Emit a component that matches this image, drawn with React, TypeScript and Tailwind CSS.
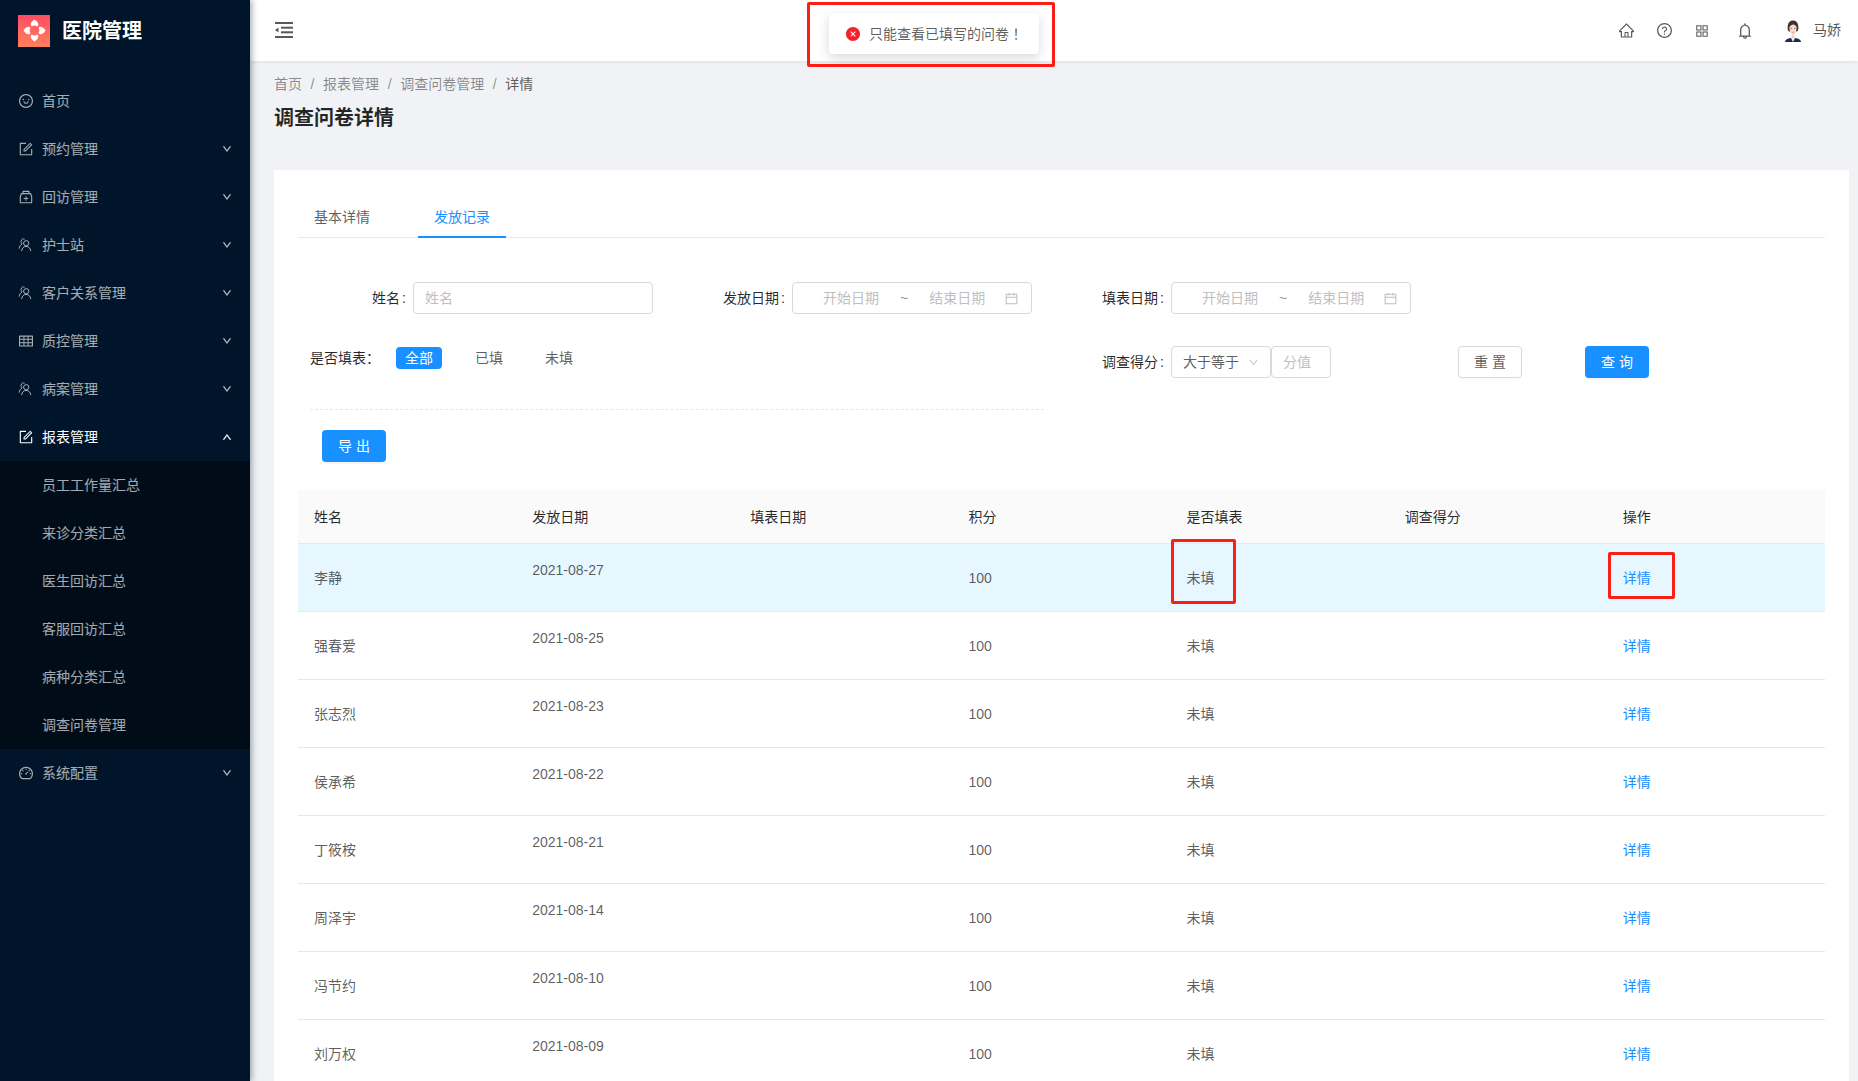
import {
  AiOutlineSmile,
  AiOutlineForm,
  AiOutlineMedicineBox,
  AiOutlineTable,
  AiOutlineDashboard,
  AiOutlineDown,
  AiOutlineUp,
  AiOutlineHome,
  AiOutlineQuestionCircle,
  AiOutlineAppstore,
  AiOutlineBell,
  AiOutlineCalendar,
  AiFillCloseCircle,
} from 'react-icons/ai';

const font = 'font-["Liberation_Sans","Noto_Sans_CJK_SC",sans-serif]';

function PeopleIcon() {
  return (
    <svg viewBox="0 0 14 14" width="14" height="14" fill="none" stroke="currentColor" strokeWidth="1">
      <circle cx="8.2" cy="5.2" r="2.6" />
      <path d="M3.6 13c.4-2.8 2.2-4.6 4.6-4.6s4.2 1.8 4.6 4.6" />
      <path d="M6.6 1.2C5 .4 3 1.4 3 3.4c0 1 .5 1.8 1.2 2.3C2.6 6.6 1.4 8.4 1.2 10.6" />
    </svg>
  );
}

function Logo() {
  const petal =
    'M12 .5c1.6 1 4 3 4 5.200 0 .9-.5 1.600-1.300 2.100C13.900 7.200 13 6.900 12 6.900s-1.900.3-2.700.9C8.500 7.300 8 6.600 8 5.700 8 3.500 10.400 1.500 12 .5z';
  return (
    <div className="w-[32px] h-[32px] bg-gradient-to-b from-[#ff4a63] to-[#ff7f5c] flex items-center justify-center">
      <svg viewBox="0 0 24 24" width="23" height="23" fill="#fff">
        <path d={petal} />
        <path d={petal} transform="rotate(90 12 12)" />
        <path d={petal} transform="rotate(180 12 12)" />
        <path d={petal} transform="rotate(270 12 12)" />
      </svg>
    </div>
  );
}

function Avatar() {
  return (
    <svg viewBox="0 0 16 22" width="16" height="22">
      <path d="M0 22c.6-3 3-4 8-4s7.4 1 8 4z" fill="#1f2a44" />
      <path d="M5.500 17h5L8 22z" fill="#f3f1ee" />
      <path d="M2.600 8c0-5 2-7.600 5.400-7.600S13.400 3 13.400 8c0 2-.6 3-1.400 3.600H4C3.200 11 2.600 10 2.600 8z" fill="#4a2f2a" />
      <path d="M4.400 7.600C5 5.600 6.400 5 8.600 4.600c1.600.6 2.800 1.400 3 3 0 4-1.600 7.400-3.600 7.400S4.400 11.600 4.400 7.600z" fill="#f4dbcf" />
      <path d="M6.600 15h2.800v3H6.600z" fill="#f0d2c4" />
      <path d="M5.600 8.400h1.400M9 8.400h1.400" stroke="#3a2a28" strokeWidth=".6" />
      <path d="M7 12.300h2" stroke="#c9605f" strokeWidth=".6" />
    </svg>
  );
}

const menu = [
  { label: '首页', icon: <AiOutlineSmile size={16} /> },
  { label: '预约管理', icon: <AiOutlineForm size={16} />, arrow: true },
  { label: '回访管理', icon: <AiOutlineMedicineBox size={16} />, arrow: true },
  { label: '护士站', icon: <PeopleIcon />, arrow: true },
  { label: '客户关系管理', icon: <PeopleIcon />, arrow: true },
  { label: '质控管理', icon: <AiOutlineTable size={16} />, arrow: true },
  { label: '病案管理', icon: <PeopleIcon />, arrow: true },
];

const subMenu = ['员工工作量汇总', '来诊分类汇总', '医生回访汇总', '客服回访汇总', '病种分类汇总', '调查问卷管理'];

const rows = [
  ['李静', '2021-08-27'],
  ['强春爱', '2021-08-25'],
  ['张志烈', '2021-08-23'],
  ['侯承希', '2021-08-22'],
  ['丁筱桉', '2021-08-21'],
  ['周泽宇', '2021-08-14'],
  ['冯节约', '2021-08-10'],
  ['刘万权', '2021-08-09'],
];

function MenuItem({ label, icon, arrow, open }: { label: string; icon: React.ReactNode; arrow?: boolean; open?: boolean }) {
  return (
    <div className={`h-[48px] flex items-center pl-[18px] pr-[18px] ${open ? 'text-white' : 'text-white/65'}`}>
      <span className="w-[24px] shrink-0 flex items-center">{icon}</span>
      <span className="flex-1 text-[14px]">{label}</span>
      {arrow && (open ? <AiOutlineUp size={10} strokeWidth={60} /> : <AiOutlineDown size={10} strokeWidth={60} />)}
    </div>
  );
}

function Sidebar() {
  return (
    <aside className="w-[250px] shrink-0 bg-[#001529] relative z-10 shadow-[2px_0_6px_rgba(0,21,41,0.35)]">
      <div className="h-[61px] flex items-center pl-[18px] gap-[12px]">
        <Logo />
        <span className="text-[20px] font-bold text-white">医院管理</span>
      </div>
      <nav className="mt-[16px]">
        {menu.map((m) => (
          <MenuItem key={m.label} {...m} />
        ))}
        <MenuItem label="报表管理" icon={<AiOutlineForm size={16} />} arrow open />
        <div className="bg-[#000c17]">
          {subMenu.map((s) => (
            <div key={s} className="h-[48px] flex items-center pl-[42px] text-[14px] text-white/65">
              {s}
            </div>
          ))}
        </div>
        <MenuItem label="系统配置" icon={<AiOutlineDashboard size={16} />} arrow />
      </nav>
    </aside>
  );
}

function TopBar() {
  return (
    <header className="h-[61px] shrink-0 bg-white shadow-[0_1px_4px_rgba(0,21,41,0.08)] flex items-center pl-[25px] pr-[17px] relative">
      <svg viewBox="0 0 18 16" width="18" height="16" className="text-[#595959] mt-[-1px]" fill="currentColor">
        <rect x="0" y="0" width="18" height="2" />
        <rect x="6" y="4.700" width="12" height="2" />
        <rect x="6" y="9.300" width="12" height="2" />
        <rect x="0" y="14" width="18" height="2" />
        <path d="M3.500 5.500v5L0 8z" />
      </svg>
      <div className="ml-auto flex items-center text-[#595959]">
        <AiOutlineHome size={17} />
        <AiOutlineQuestionCircle size={17} className="ml-[21px]" />
        <AiOutlineAppstore size={16} className="ml-[21px]" />
        <AiOutlineBell size={18} className="ml-[26px]" />
        <span className="ml-[31px] flex"><Avatar /></span>
        <span className="ml-[12px] text-[14px]">马娇</span>
      </div>
    </header>
  );
}

function Breadcrumb() {
  const items = ['首页', '报表管理', '调查问卷管理'];
  return (
    <div className="flex items-center text-[14px] leading-[22px] text-black/45">
      {items.map((i) => (
        <span key={i} className="flex">
          {i}
          <span className="mx-[8.6px]">/</span>
        </span>
      ))}
      <span className="text-black/65">详情</span>
    </div>
  );
}

function DateRange() {
  return (
    <div className="w-[240px] h-[32px] border border-[#d9d9d9] rounded bg-white flex items-center pl-[30px] pr-[12px] text-[14px] text-[#bfbfbf]">
      <span className="w-[56px]">开始日期</span>
      <span className="mx-[21px] text-black/45">~</span>
      <span className="w-[56px]">结束日期</span>
      <AiOutlineCalendar size={15} className="ml-auto" />
    </div>
  );
}

function Field({ label, children }: { label: string; children: React.ReactNode }) {
  return (
    <div className="flex items-center gap-[7px]">
      <label className="w-[80px] text-right text-[14px] text-black/85">
        {label}
        <span className="ml-[2px]">:</span>
      </label>
      {children}
    </div>
  );
}

const btnPrimary = 'w-[64px] h-[32px] rounded bg-[#1890ff] text-white text-[14px] shadow-[0_2px_0_rgba(0,0,0,0.045)]';

function FilterForm() {
  return (
    <div>
      <div className="flex gap-[52px] pl-[28px] mt-[44px]">
        <Field label="姓名">
          <input
            placeholder="姓名"
            className="w-[240px] h-[32px] border border-[#d9d9d9] rounded px-[11px] text-[14px] placeholder:text-[#bfbfbf] outline-none"
          />
        </Field>
        <Field label="发放日期">
          <DateRange />
        </Field>
        <Field label="填表日期">
          <DateRange />
        </Field>
      </div>
      <div className="flex mt-[32px] pl-[12px]">
        <div className="w-[734px]">
          <div className="flex items-center h-[22px] mt-[1px] text-[14px]">
            <span className="text-black/85 w-[86px]">是否填表：</span>
            <span className="w-[46px] h-[22px] rounded bg-[#1890ff] text-white flex items-center justify-center">全部</span>
            <span className="ml-[33px] text-black/65">已填</span>
            <span className="ml-[42px] text-black/65">未填</span>
          </div>
          <div className="mt-[40px] border-t border-dashed border-[#e8e8e8]" />
          <button className={`${btnPrimary} ml-[12px] mt-[20px]`}>导 出</button>
        </div>
        <div className="ml-[40px] flex items-start">
          <Field label="调查得分">
            <div className="w-[100px] h-[32px] border border-[#d9d9d9] rounded flex items-center pl-[11px] pr-[11px] text-[14px] text-black/65">
              大于等于
              <AiOutlineDown size={11} className="ml-auto text-[#bfbfbf]" />
            </div>
          </Field>
          <input
            placeholder="分值"
            className="w-[60px] h-[32px] border border-[#d9d9d9] rounded px-[11px] text-[14px] placeholder:text-[#bfbfbf] outline-none"
          />
          <button className="w-[64px] h-[32px] ml-[127px] rounded border border-[#d9d9d9] bg-white text-black/65 text-[14px] shadow-[0_2px_0_rgba(0,0,0,0.015)]">
            重 置
          </button>
          <button className={`${btnPrimary} ml-[63px]`}>查 询</button>
        </div>
      </div>
    </div>
  );
}

function RecordTable() {
  const heads = ['姓名', '发放日期', '填表日期', '积分', '是否填表', '调查得分', '操作'];
  return (
    <table className="mt-[28px] w-full table-fixed text-[14px] text-left">
      <thead>
        <tr className="h-[53px] bg-[#fafafa] border-b border-[#e8e8e8]">
          {heads.map((h) => (
            <th key={h} className="px-[16px] pt-[3px] font-normal text-black/85">
              {h}
            </th>
          ))}
        </tr>
      </thead>
      <tbody>
        {rows.map(([name, date], i) => (
          <tr key={name} className={`h-[68px] border-b border-[#e8e8e8] text-black/65 ${i === 0 ? 'bg-[#e6f7ff]' : ''}`}>
            <td className="px-[16px] pt-[2px]">{name}</td>
            <td className="px-[16px] pb-[14px]">{date}</td>
            <td className="px-[16px]"></td>
            <td className="px-[16px] pt-[2px]">100</td>
            <td className="px-[16px] pt-[2px]">未填</td>
            <td className="px-[16px]"></td>
            <td className="px-[16px] pt-[2px] text-[#1890ff]">详情</td>
          </tr>
        ))}
      </tbody>
    </table>
  );
}

export default function App() {
  return (
    <div className={`${font} relative h-[1081px] w-full flex overflow-hidden bg-[#f0f2f5]`}>
      <Sidebar />
      <div className="flex-1 min-w-0 flex flex-col">
        <TopBar />
        <main className="pl-[24px] pr-[9px]">
          <div className="pt-[12px]">
            <Breadcrumb />
            <h1 className="mt-[9px] text-[20px] leading-[28px] font-semibold text-black/85">调查问卷详情</h1>
          </div>
          <section className="mt-[38px] bg-white px-[24px] pt-[24px] pb-[24px]">
            <div className="flex border-b border-[#e8e8e8] h-[44px] text-[14px]">
              <div className="w-[88px] px-[16px] pt-[13px] text-black/65">基本详情</div>
              <div className="w-[88px] ml-[32px] px-[16px] pt-[13px] text-[#1890ff] border-b-2 border-[#1890ff] h-[44px]">发放记录</div>
            </div>
            <FilterForm />
            <RecordTable />
          </section>
        </main>
      </div>

      {/* toast */}
      <div className="absolute left-[829px] top-[13px] w-[210px] h-[41px] bg-white rounded shadow-[0_4px_12px_rgba(0,0,0,0.15)] flex items-center pl-[16px] gap-[8px] text-[14px] text-black/65 z-20">
        <AiFillCloseCircle size={16} className="text-[#f5222d]" />
        <span>
          只能查看已填写的问卷<span className='font-["Noto_Sans_CJK_TC",sans-serif]'>！</span>
        </span>
      </div>

      {/* red review marks */}
      <div className="absolute left-[807px] top-[2px] w-[248px] h-[65px] border-[3px] border-[#fa1e14] rounded-[2px] z-30" />
      <div className="absolute left-[1171px] top-[539px] w-[65px] h-[65px] border-[3px] border-[#fa1e14] rounded-[2px] z-30" />
      <div className="absolute left-[1608px] top-[552px] w-[67px] h-[47px] border-[3px] border-[#fa1e14] rounded-[2px] z-30" />
    </div>
  );
}
